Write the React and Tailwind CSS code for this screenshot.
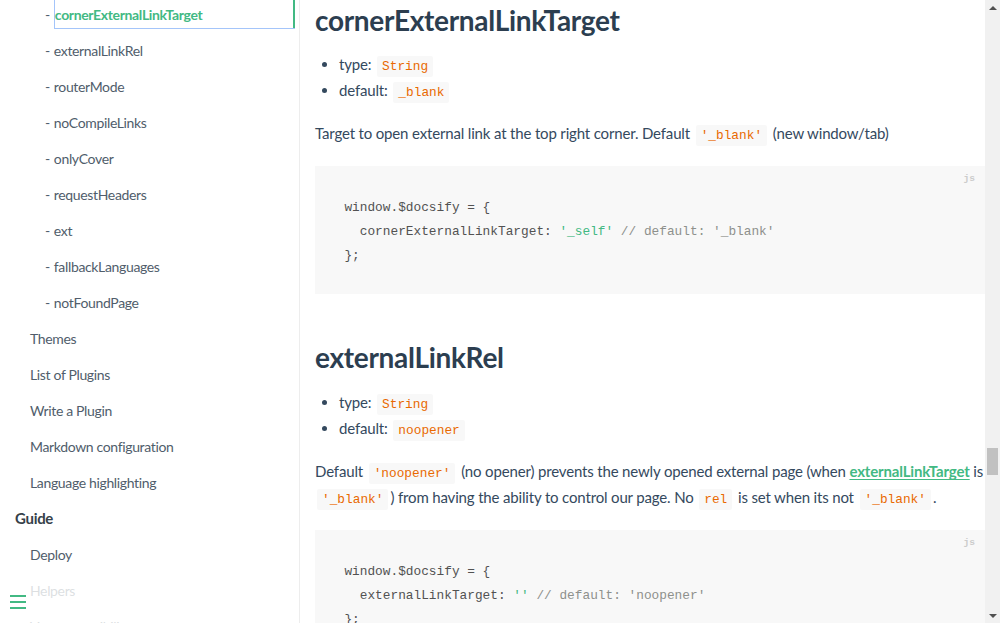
import React from "react";

const sans = "font-['Lato','Liberation_Sans',sans-serif]";
const mono = "font-['Liberation_Mono','DejaVu_Sans_Mono',monospace]";

function IC({ children }) {
  return (
    <code className={`${mono} mx-[2px] rounded-[2px] bg-[#f8f8f8] px-[5px] py-[3px] text-[12.8px] leading-none tracking-normal text-[#e96900] [word-spacing:0]`}>
      {children}
    </code>
  );
}

const rows = [
  { t: "cornerExternalLinkTarget", lvl: 2, active: true },
  { t: "externalLinkRel", lvl: 2 },
  { t: "routerMode", lvl: 2 },
  { t: "noCompileLinks", lvl: 2 },
  { t: "onlyCover", lvl: 2 },
  { t: "requestHeaders", lvl: 2 },
  { t: "ext", lvl: 2 },
  { t: "fallbackLanguages", lvl: 2 },
  { t: "notFoundPage", lvl: 2 },
  { t: "Themes", lvl: 1 },
  { t: "List of Plugins", lvl: 1 },
  { t: "Write a Plugin", lvl: 1 },
  { t: "Markdown configuration", lvl: 1 },
  { t: "Language highlighting", lvl: 1 },
  { t: "Guide", lvl: 0 },
  { t: "Deploy", lvl: 1 },
  { t: "Helpers", lvl: 1 },
  { t: "Vue compatibility", lvl: 1 },
];

function Row({ r }) {
  if (r.lvl === 0) {
    return (
      <li className="flex h-9 items-center pl-[15px] text-[15px] font-bold tracking-[-0.3px] text-[#364149]">{r.t}</li>
    );
  }
  if (r.lvl === 1) {
    return <li className="flex h-9 items-center pl-[30px] text-[14px] tracking-[-0.35px] text-[#505d6b]">{r.t}</li>;
  }
  return (
    <li className="flex h-9 items-center pl-[45px] text-[14px] tracking-[-0.35px] text-[#505d6b]">
      <span className="pr-[4px]">-</span>
      {r.active ? (
        <span className="mr-[4px] flex h-[30px] flex-1 items-center border border-r-0 border-[#a4c5fa] font-bold text-[#42b983]">
          <span className="flex-1">{r.t}</span>
          <span className="h-full w-[2px] bg-[#42b983]" />
        </span>
      ) : (
        <span>{r.t}</span>
      )}
    </li>
  );
}

function Pre({ children }) {
  return (
    <div className="relative bg-[#f8f8f8] px-[22.4px] tracking-normal">
      <span className={`${mono} absolute right-0 top-0 px-[10px] pt-[5px] text-[9.6px] font-bold leading-[15px] text-[#cccccc]`}>
        js
      </span>
      <pre className={`${mono} mx-[2px] px-[5px] pb-[26.2px] pt-[30.2px] text-[12.8px] leading-[24px] text-[#525252]`}>
        {children}
      </pre>
    </div>
  );
}

export default function App() {
  return (
    <div className={`${sans} flex h-[623px] w-[1000px] overflow-hidden bg-white`}>
      <aside className="relative h-full w-[300px] shrink-0 overflow-hidden border-r border-[#ededed]">
        <ul className="-mt-[4px]">
          {rows.map((r) => (
            <Row key={r.t} r={r} />
          ))}
        </ul>
        <div className="absolute bottom-0 left-0 w-[284px] bg-white/80 p-[10px]">
          <span className="mb-[4px] block h-[2px] w-[16px] bg-[#42b983]" />
          <span className="mb-[4px] block h-[2px] w-[16px] bg-[#42b983]" />
          <span className="mb-[4px] block h-[2px] w-[16px] bg-[#42b983]" />
        </div>
      </aside>

      <main className="min-w-0 flex-1 pl-[15px] text-[15px] tracking-[-0.16px] text-[#34495e]">
        <h2 className="mt-[2px] text-[28px] font-bold leading-[36px] tracking-[-0.3px] text-[#2c3e50]">cornerExternalLinkTarget</h2>
        <ul className="mt-[14px] list-disc pl-6 leading-[25.6px]">
          <li>
            type: <IC>String</IC>
          </li>
          <li>
            default: <IC>_blank</IC>
          </li>
        </ul>
        <p className="mt-[18px] leading-[25.6px]">
          Target to open external link at the top right corner. Default <IC>'_blank'</IC> (new window/tab)
        </p>
        <div className="mt-[19px]">
          <Pre>
            {"window.$docsify = {\n  cornerExternalLinkTarget: "}
            <span className="text-[#42b983]">'_self'</span>
            <span className="text-[#8e908c]"> // default: '_blank'</span>
            {"\n};"}
          </Pre>
        </div>

        <h2 className="mt-[45px] text-[28px] font-bold leading-[36px] tracking-[-0.3px] text-[#2c3e50]">externalLinkRel</h2>
        <ul className="mt-[15px] list-disc pl-6 leading-[25.6px]">
          <li>
            type: <IC>String</IC>
          </li>
          <li>
            default: <IC>noopener</IC>
          </li>
        </ul>
        <p className="mt-[18px] whitespace-nowrap leading-[25.6px]">
          Default <IC>'noopener'</IC> (no opener) prevents the newly opened external page (when{" "}
          <a className="font-bold text-[#42b983] underline underline-offset-2">externalLinkTarget</a> is
          <br />
          <IC>'_blank'</IC>) from having the ability to control our page. No <IC>rel</IC> is set when its not{" "}
          <IC>'_blank'</IC>.
        </p>
        <div className="mt-[19px]">
          <Pre>
            {"window.$docsify = {\n  externalLinkTarget: "}
            <span className="text-[#42b983]">''</span>
            <span className="text-[#8e908c]"> // default: 'noopener'</span>
            {"\n};"}
          </Pre>
        </div>
      </main>

      <div className="flex h-full w-[15px] shrink-0 flex-col items-center bg-[#f1f1f1]">
        <div className="flex h-[15px] w-full items-center justify-center">
          <span className="h-0 w-0 border-x-[4px] border-b-[4px] border-x-transparent border-b-[#505050]" />
        </div>
        <div className="w-full flex-1">
          <div className="mx-auto mt-[433px] h-[27px] w-[11px] bg-[#c1c1c1]" />
        </div>
        <div className="flex h-[15px] w-full items-center justify-center">
          <span className="h-0 w-0 border-x-[4px] border-t-[4px] border-x-transparent border-t-[#505050]" />
        </div>
      </div>
    </div>
  );
}
